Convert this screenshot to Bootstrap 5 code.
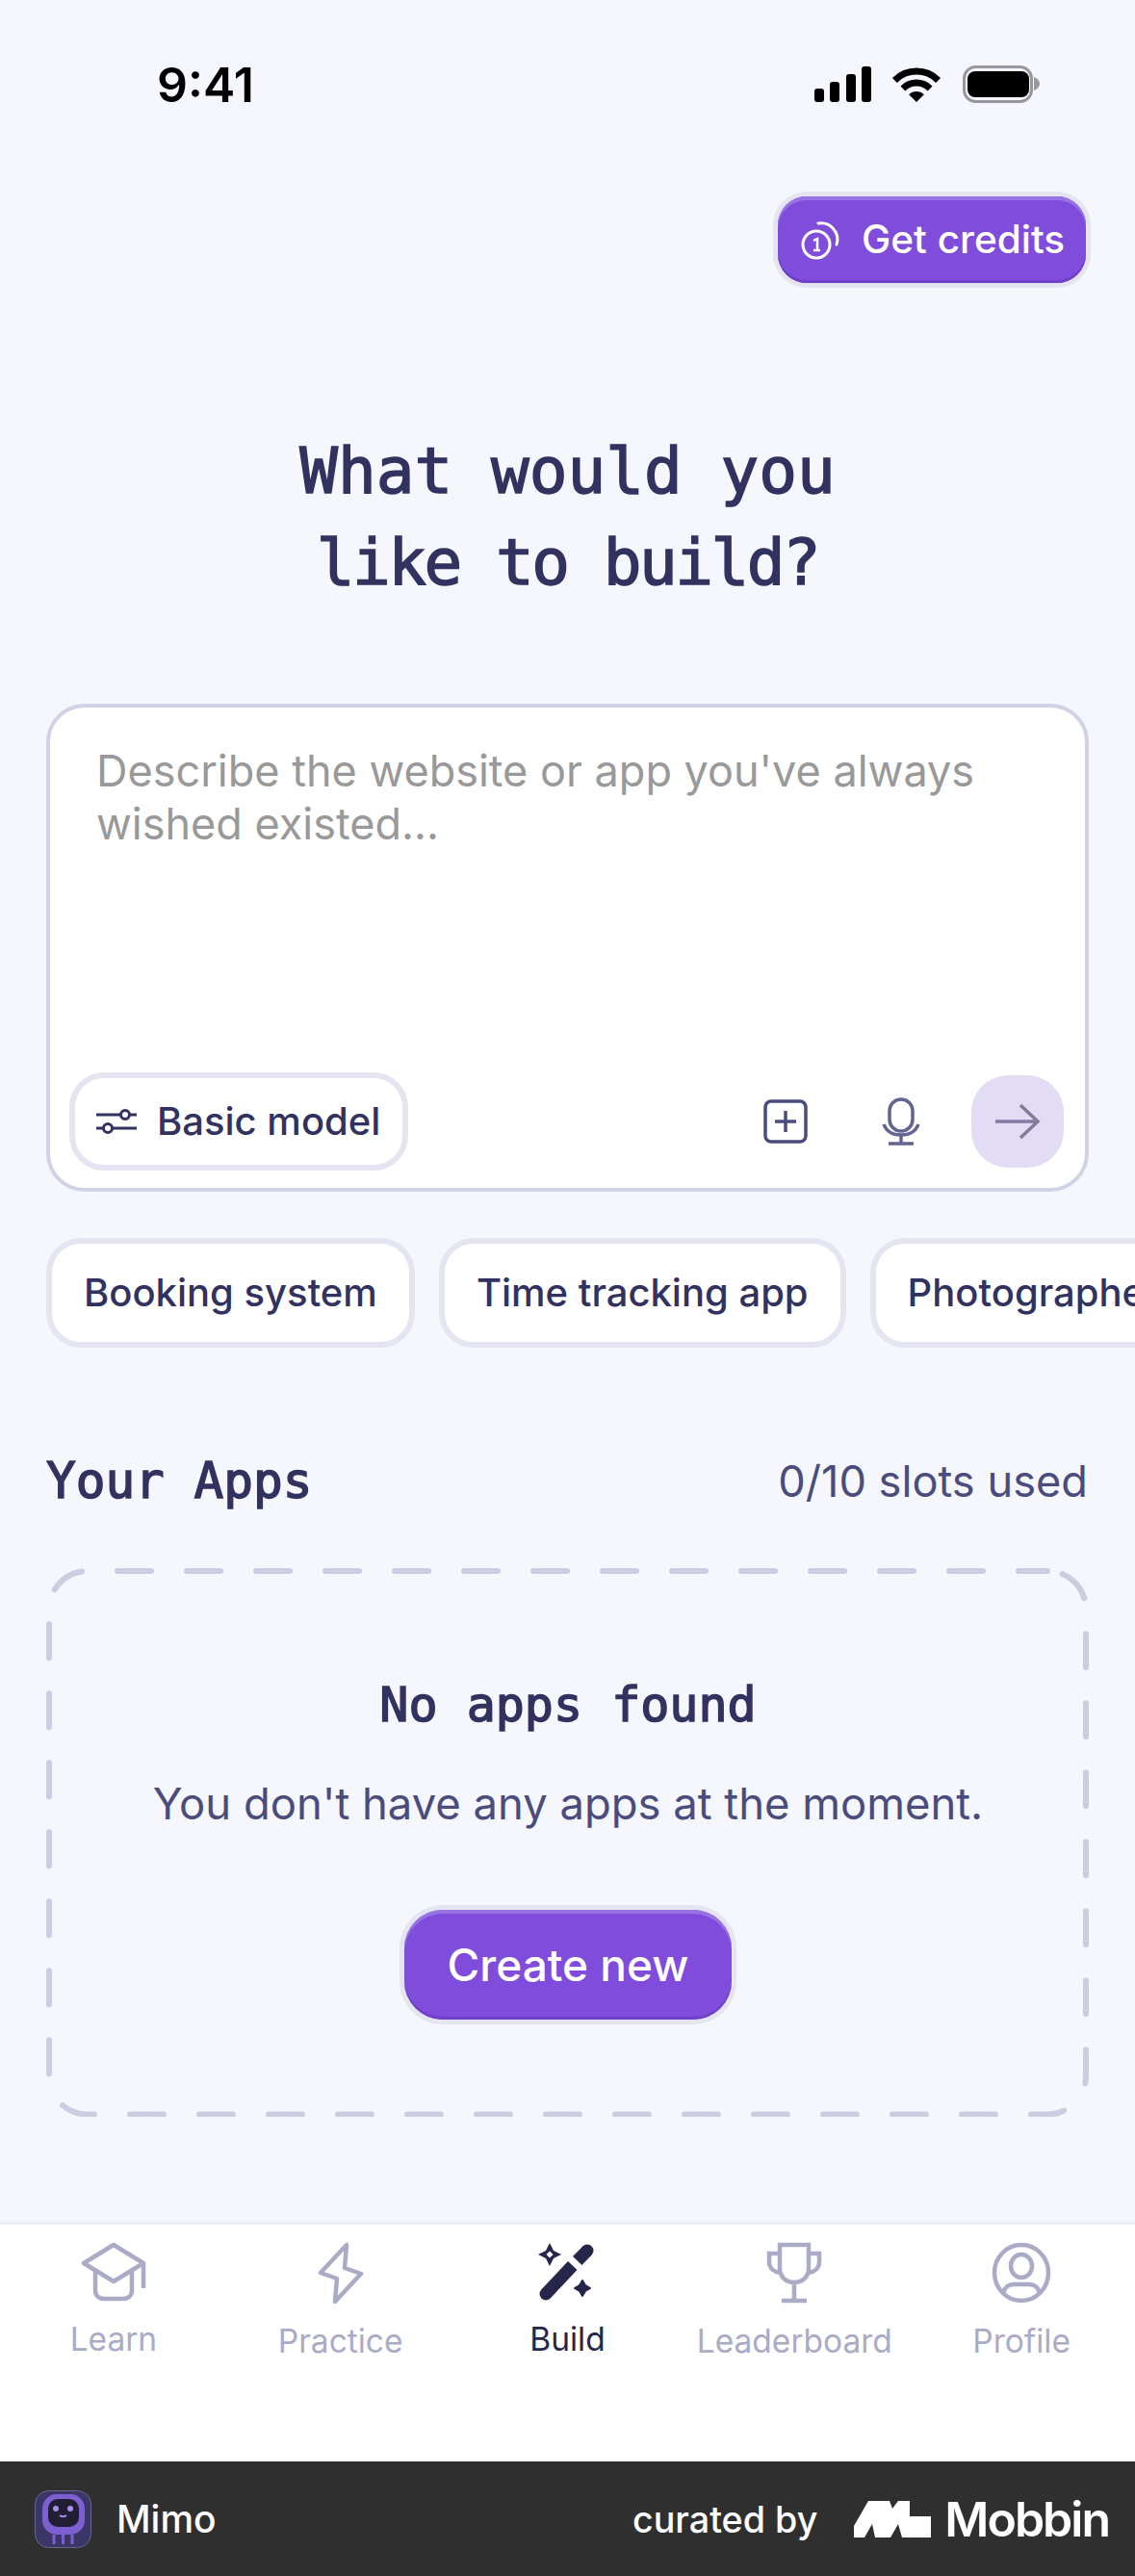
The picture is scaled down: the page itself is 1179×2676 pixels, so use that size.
<!DOCTYPE html>
<html>
  <head>
    <meta charset="utf-8" />
    <title>Mimo Build</title>
    <link href="https://cdn.jsdelivr.net/npm/bootstrap@5.3.2/dist/css/bootstrap.min.css" rel="stylesheet" />
    <style>
      html, body { height: 100%; }
      body { background: #f5f7fc; color: #31325f; font-family: Inter, "Liberation Sans", sans-serif; width: 1179px; height: 2676px; overflow: hidden; }
      .mono { font-family: "DejaVu Sans Mono", "Liberation Mono", monospace; font-weight: 400; -webkit-text-stroke: 1.5px currentColor; }
      .phone-status { height: 130px; padding: 62px 99px 0 163px; }
      .clock { font-weight: 600; font-size: 50px; line-height: 52px; color: #000; width: 102px; }
      .status-icons { margin-top: 6px; }
      .top-action { height: 90px; margin: 74px 51px 0 0; }
      .buy-btn { background: #7f4cdb; color: #fff; border: 0; border-radius: 30px; font-weight: 500; box-shadow: 0 0 0 5px #e4e5f0, inset 0 4px 0 #9873e4, inset 0 -3px 0 #7041c8; }
      .buy-btn:hover { background: #7f4cdb; color: #fff; }
      .credits { width: 320px; height: 90px; font-size: 40.5px; padding: 0 0 0 24px; gap: 21px; }
      .headline { font-size: 66px; line-height: 95px; margin: 148px 0 0; color: #31325f; }
      .tight-line { letter-spacing: -2.5px; }
      .prompt { margin: 99px 48px 0 48px; height: 507px; background: #fff; border: 4px solid #d1d2e5; border-radius: 40px; padding: 18px 22px 18px 20px; }
      .prompt-text { font-size: 45px; line-height: 55px; color: #999; padding: 20px 20px 0 28px; }
      .pill { background: #fff; border: 6px solid #e4e5f1; color: #31325f; font-weight: 500; font-size: 40px; border-radius: 36px; white-space: nowrap; }
      .model { width: 352px; height: 102px; gap: 21px; padding-left: 22px; }
      .send { width: 96px; height: 96px; border-radius: 38px; background: #e3dcf5; }
      .chips { margin: 48px 0 0 48px; gap: 25px; overflow: hidden; }
      .chip { height: 114px; padding: 0 33px; flex: none; }
      .apps-head { margin: 111px 49px 0 48px; height: 56px; }
      .apps-title { font-size: 51px; color: #31325f; }
      .slots { font-size: 45.2px; color: #4b4c7e; }
      .empty { position: relative; margin: 62px 47px 0 48px; height: 570px; padding-top: 114px; }
      .dash { position: absolute; left: 0; top: 0; }
      .empty-title { font-size: 50px; line-height: 56px; color: #31325f; margin: 0 0 47px; }
      .empty-text { font-size: 45.4px; line-height: 56px; color: #4b4c7e; margin: 0 0 82px; }
      .create { width: 340px; height: 114px; font-size: 46px; border-radius: 40px; }
      .tabs { margin-top: 109px; height: 249px; background: #fff; border-top: 3px solid #edeef6; }
      .tab-item { width: 236px; padding-top: 18px; color: #aaabc7; font-size: 33.5px; line-height: 40px; }
      .tab-item.on { color: #25264a; }
      .tab-item svg { display: block; margin: 0 auto 19px; }
      .credit-bar { height: 120px; background: #2f2f2f; color: #fff; padding: 0 27px 0 36px; font-size: 39px; font-weight: 500; }
      .curated { font-size: 37.7px; margin-right: 38px; }
      .mobbin { font-size: 50px; font-weight: 600; letter-spacing: -2px; }
    </style>
  </head>
  <body>
    <div class="phone-status d-flex justify-content-between align-items-start">
      <div class="clock">9:41</div>
      <svg class="status-icons" width="234" height="40" viewBox="0 0 234 40">
        <g fill="#000">
          <rect x="0" y="24" width="10" height="14" rx="3"/><rect x="16" y="17" width="10" height="21" rx="3"/><rect x="33" y="9" width="10" height="29" rx="3"/><rect x="49" y="1" width="10" height="37" rx="3"/>
          <path d="M106 38 98.2 30.2A11 11 0 0 1 113.8 30.2z"/>
        </g>
        <path d="M91.9 23.9A20 20 0 0 1 120.1 23.9M83.4 15.4A32 32 0 0 1 128.6 15.4" fill="none" stroke="#000" stroke-width="7"/>
        <rect x="155.5" y="1.5" width="70" height="36" rx="12" fill="none" stroke="#98989c" stroke-width="3"/>
        <rect x="159" y="6" width="64" height="27" rx="8" fill="#000"/>
        <path d="M228 12c3 1 6 4 6 7s-3 6-6 7z" fill="#98989c"/>
      </svg>
    </div>
    <div class="top-action d-flex justify-content-end">
      <button class="btn buy-btn credits d-flex align-items-center">
        <svg width="42" height="42" viewBox="0 0 42 42" fill="none" stroke="#fff" stroke-width="3"><circle cx="16" cy="26" r="14"/><path d="M18 4a17 17 0 0 1 19 22" stroke-linecap="round"/><path d="M13 22l4-2v12M13 32h7" stroke-width="2.5"/></svg>
        <span>Get credits</span>
      </button>
    </div>
    <h1 class="headline mono text-center">What would you<br /><span class="tight-line">like to build?</span></h1>
    <div class="prompt d-flex flex-column justify-content-between">
      <div class="prompt-text">Describe the website or app you've always wished existed...</div>
      <div class="d-flex align-items-center">
        <div class="pill model d-flex align-items-center">
          <svg width="42" height="34" viewBox="0 0 42 34" fill="none" stroke="#31325f" stroke-width="3"><path d="M0 10h26M34 10h8M0 24h8M16 24h26"/><circle cx="30" cy="10" r="4.5"/><circle cx="12" cy="24" r="4.5"/></svg>
          <span>Basic model</span>
        </div>
        <svg class="ms-auto" width="46" height="46" viewBox="0 0 46 46" fill="none" stroke="#4b4c7e" stroke-width="3.5"><rect x="2" y="2" width="42" height="42" rx="6"/><path d="M23 12v22M12 23h22"/></svg>
        <svg style="margin-left:77px" width="40" height="50" viewBox="0 0 40 50" fill="none" stroke="#63648f" stroke-width="3.5"><rect x="8" y="2" width="24" height="33" rx="12"/><path d="M2 28c3 8 10 11 18 11s15-3 18-11M20 39v8M7 48h26"/></svg>
        <div class="send d-flex align-items-center justify-content-center" style="margin-left:53px">
          <svg width="48" height="38" viewBox="0 0 48 38" fill="none" stroke="#857b9f" stroke-width="3.5"><path d="M1 19h44M27 2l18 17-18 17"/></svg>
        </div>
      </div>
    </div>
    <div class="chips d-flex">
      <div class="pill chip d-flex align-items-center">Booking system</div>
      <div class="pill chip d-flex align-items-center">Time tracking app</div>
      <div class="pill chip d-flex align-items-center">Photographer portfolio</div>
    </div>
    <div class="apps-head d-flex justify-content-between align-items-center">
      <div class="apps-title mono">Your Apps</div>
      <div class="slots">0/10 slots used</div>
    </div>
    <div class="empty text-center">
      <svg class="dash" width="1084" height="570" viewBox="0 0 1084 570" fill="none" stroke="#cccde1" stroke-width="6" stroke-linecap="round"><path d="M1040 3A40 40 0 0 1 1080 43V527.5A40 40 0 0 1 1040 567.5H43A40 40 0 0 1 3 527.5V43A40 40 0 0 1 43 3H1040" stroke-dasharray="35 37" stroke-dashoffset="-16"/></svg>
      <h2 class="empty-title mono">No apps found</h2>
      <p class="empty-text">You don't have any apps at the moment.</p>
      <button class="btn buy-btn create">Create new</button>
    </div>
    <div class="tabs d-flex">
      <div class="tab-item text-center">
        <svg width="68" height="62" viewBox="0 0 68 62" fill="none" stroke="#aaabc7" stroke-width="4.5" stroke-linejoin="round"><path d="M34 3 3 22l31 19 31-19z"/><path d="M15 30v20c0 6 4 9 9 9h20c5 0 9-3 9-9V30M65 22v26"/></svg>
        Learn
      </div>
      <div class="tab-item text-center">
        <svg width="48" height="64" viewBox="0 0 48 64" fill="none" stroke="#aaabc7" stroke-width="4.5" stroke-linejoin="round"><path d="M30 3 3 32l17 6-2 24 27-29-17-6z"/></svg>
        Practice
      </div>
      <div class="tab-item on text-center">
        <svg width="62" height="62" viewBox="0 0 62 62" fill="#25264a" stroke="none">
          <path fill-rule="evenodd" d="M13 1 17 9 25 13 17 17 13 25 9 17 1 13 9 9zM13 9.5 9.5 13 13 16.5 16.5 13z"/>
          <path d="M47 40 50 45 55 48 50 51 47 56 44 51 39 48 44 45z" stroke="#25264a" stroke-width="2" stroke-linejoin="round"/>
          <circle cx="9" cy="54" r="6.5"/><path d="M4.3 49.5 32 20 41.5 29 13.7 58.5z"/>
          <circle cx="52" cy="9" r="6.5"/><path d="M47.4 4.4 37 15 46.5 24 56.6 13.6z"/>
        </svg>
        Build
      </div>
      <div class="tab-item text-center">
        <svg width="58" height="64" viewBox="0 0 58 64" fill="none" stroke="#aaabc7" stroke-width="4.5"><path d="M14 3h30v24c0 9-6 15-15 15s-15-6-15-15zM14 12H3v9c0 6 5 10 11 11M44 12h11v9c0 6-5 10-11 11M29 42v18M16 61h26"/></svg>
        Leaderboard
      </div>
      <div class="tab-item text-center">
        <svg width="62" height="64" viewBox="0 0 62 64" fill="none" stroke="#aaabc7" stroke-width="4.5"><ellipse cx="31" cy="32" rx="28" ry="29"/><ellipse cx="31" cy="25" rx="11" ry="12"/><path d="M12 53c2-7 6-9 11-9h16c5 0 9 2 11 9"/></svg>
        Profile
      </div>
    </div>
    <div class="credit-bar d-flex align-items-center justify-content-between">
      <div class="d-flex align-items-center" style="gap:26px">
        <svg width="59" height="60" viewBox="0 0 59 60">
          <rect x="0.5" y="0.5" width="58" height="59" rx="14" fill="#3a3666" stroke="#6a6690"/>
          <rect x="8" y="4" width="44" height="42" rx="15" fill="#7d5fd1"/>
          <rect x="14" y="9" width="32" height="29" rx="10" fill="#1f1e33"/>
          <circle cx="22" cy="19" r="3" fill="#a88de8"/><circle cx="37" cy="19" r="3" fill="#a88de8"/>
          <path d="M26 26c2 1.500 5 1.500 7 0" stroke="#a88de8" stroke-width="2" fill="none"/>
          <path d="M20 46v10M29.500 46v10M39 46v10" stroke="#7d5fd1" stroke-width="3"/>
        </svg>
        <span>Mimo</span>
      </div>
      <div class="d-flex align-items-center">
        <span class="curated">curated by</span>
        <svg width="80" height="38" viewBox="0 0 80 38" fill="#fff" style="margin-right:14px"><path d="M0 38V26L15 0H37L40 8 46 0H58V16H80V38H50L46 24 38 38H22L19 24 11 38z"/></svg>
        <span class="mobbin">Mobbin</span>
      </div>
    </div>
  </body>
</html>
